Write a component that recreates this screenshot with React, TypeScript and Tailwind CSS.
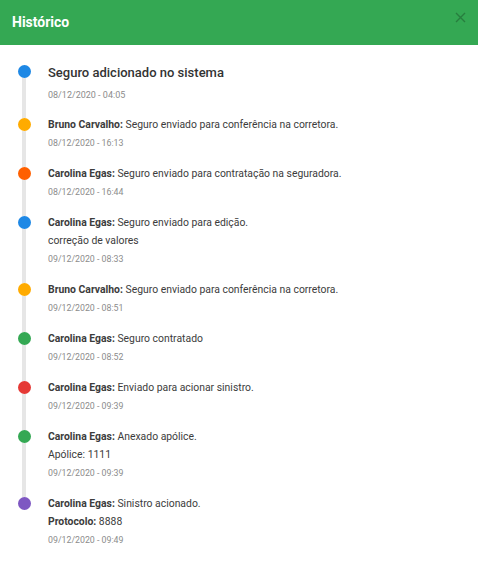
import React from 'react';

interface HistoryItem {
    color: string;
    name?: string;
    text: string;
    extra?: React.ReactNode;
    date: string;
}

const items: HistoryItem[] = [
    { color: 'bg-[#ffab00]', name: 'Bruno Carvalho:', text: 'Seguro enviado para conferência na corretora.', date: '08/12/2020 - 16:13' },
    { color: 'bg-[#ff6000]', name: 'Carolina Egas:', text: 'Seguro enviado para contratação na seguradora.', date: '08/12/2020 - 16:44' },
    { color: 'bg-[#1e88e5]', name: 'Carolina Egas:', text: 'Seguro enviado para edição.', extra: 'correção de valores', date: '09/12/2020 - 08:33' },
    { color: 'bg-[#ffab00]', name: 'Bruno Carvalho:', text: 'Seguro enviado para conferência na corretora.', date: '09/12/2020 - 08:51' },
    { color: 'bg-[#34a853]', name: 'Carolina Egas:', text: 'Seguro contratado', date: '09/12/2020 - 08:52' },
    { color: 'bg-[#e53935]', name: 'Carolina Egas:', text: 'Enviado para acionar sinistro.', date: '09/12/2020 - 09:39' },
    { color: 'bg-[#34a853]', name: 'Carolina Egas:', text: 'Anexado apólice.', extra: 'Apólice: 1111', date: '09/12/2020 - 09:39' },
    {
        color: 'bg-[#7e57c2]',
        name: 'Carolina Egas:',
        text: 'Sinistro acionado.',
        extra: (
            <>
                <span className="font-bold">Protocolo:</span> 8888
            </>
        ),
        date: '09/12/2020 - 09:49',
    },
];

const Rail: React.FC<{ color: string; first?: boolean; last?: boolean }> = ({ color, first, last }) => (
    <div className="w-12 flex flex-col items-center shrink-0">
        <div className={`w-1 h-[6px] ${first ? '' : 'bg-[#e6e6e6]'}`} />
        <div className={`w-[13px] h-[13px] rounded-full ${color}`} />
        <div className={`w-1 flex-1 ${last ? '' : 'bg-[#e6e6e6]'}`} />
    </div>
);

export default function App() {
    return (
        <div className="w-[478px] h-[572px] bg-white font-['Roboto',sans-serif] text-[#3c3c3c]">
            <div className="h-[45px] bg-[#34a853] flex items-center justify-between pl-3 pr-[12px]">
                <h2 className="text-white text-[14px] font-bold">Histórico</h2>
                <button className="text-black/25 -mt-[10px]">
                    <svg width="11" height="11" viewBox="0 0 11 11" stroke="currentColor" strokeWidth="1.4">
                        <path d="M1 1l9 9M10 1l-9 9" />
                    </svg>
                </button>
            </div>

            <div className="pt-[14px]">
                <div className="flex">
                    <Rail color="bg-[#1e88e5]" first />
                    <div className="pt-[4px] pb-[8px]">
                        <div className="text-[13px] leading-[20px] font-medium text-[#333] mb-[3px]">Seguro adicionado no sistema</div>
                        <div className="text-[9px] leading-[18px] text-[#8c8c8c]">08/12/2020 - 04:05</div>
                    </div>
                </div>

                {items.map((item, i) => (
                    <div key={i} className="flex">
                        <Rail color={item.color} last={i === items.length - 1} />
                        <div className="pt-[4px] pb-[9px]">
                            <div className="text-[10.4px] leading-[18px]">
                                <span className="font-bold">{item.name}</span> {item.text}
                            </div>
                            {item.extra && <div className="text-[10.4px] leading-[18px]">{item.extra}</div>}
                            <div className="text-[8.8px] leading-[18px] text-[#8c8c8c]">{item.date}</div>
                        </div>
                    </div>
                ))}
            </div>
        </div>
    );
}
